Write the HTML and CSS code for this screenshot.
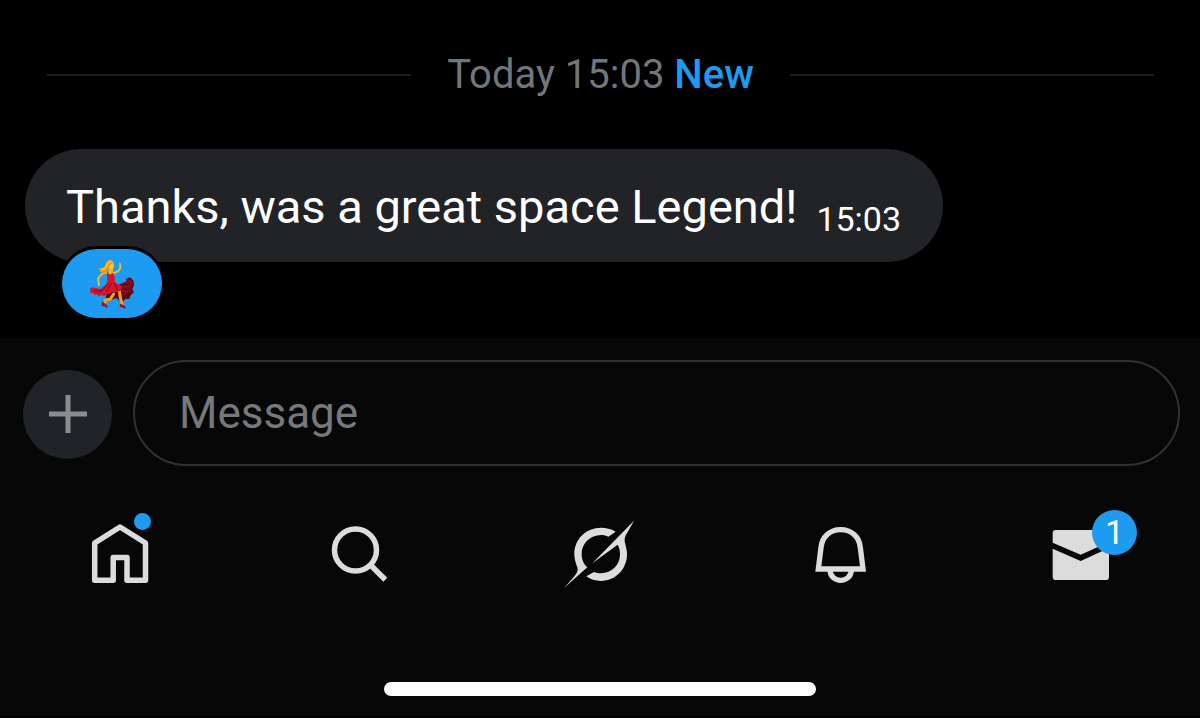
FILE: index.html
```html
<!DOCTYPE html>
<html lang="en">
<head>
<meta charset="utf-8">
<meta name="viewport" content="width=device-width, initial-scale=1">
<title>Messages</title>
<link rel="stylesheet" href="styles.css">
</head>
<body>
<main class="thread">
  <div class="divider"><span class="divider-label">Today 15:03 <strong class="divider-new">New</strong></span></div>
  <div class="message">
    <p class="bubble"><span class="bubble-text">Thanks, was a great space Legend!</span><time class="bubble-time">15:03</time></p>
    <button class="reaction" type="button" aria-label="Dancer reaction">
      <svg class="reaction-icon" viewBox="110 66 150 156" aria-hidden="true">
        <path fill="#5d0712" d="M186 158L211 143L230 136L226 130L238 124L249 133L251 148L246 159L251 169L241 178L237 189L226 188L219 196L205 193L200 187L180 191L166 187L168 175Z"/>
        <path fill="#8d0b1d" d="M211 146L238 128L246 138L238 154L240 166L229 171L222 181L208 169Z"/>
        <path fill="none" stroke="#390611" stroke-width="3" d="M215 148L240 143M214 158L237 161M211 168L227 180"/>
        <path fill="none" stroke="#eca51f" stroke-width="9" stroke-linejoin="round" stroke-linecap="round" d="M207 166L210 185L216 207M190 174L179 190L166 192L162 204"/>
        <path fill="#a30d20" d="M155 196L163 202L173 211L171 215L160 210L154 211ZM209 203L218 206L227 214L224 218L214 214L208 214Z"/>
        <path fill="none" stroke="#f3b72b" stroke-width="6" stroke-linejoin="round" stroke-linecap="round" d="M170 109L153 115L143 128L146 147M190 112L204 105L210 96L209 83"/>
        <path fill="#f6b427" d="M174 98L187 96L190 116L173 119Z"/>
        <path fill="#d31429" d="M170 105L178 116L188 110L193 123L194 139L214 151L212 164L199 169L187 168L177 174L169 172L163 181L154 177L146 181L140 175L132 177L128 171L119 171L121 164L118 158L126 154L151 159L171 141Z"/>
        <path fill="none" stroke="#8c071d" stroke-width="3" d="M175 141L153 166L132 164M184 142L168 165M193 141L201 164M142 172L153 160"/>
        <ellipse cx="182" cy="87" rx="9" ry="13" fill="#ffc43a"/>
        <path fill="#e99814" d="M190 82C187 73 178 70 171 74C165 78 166 87 160 93C154 98 148 94 144 99C149 99 150 102 147 108C154 105 153 113 159 109C158 115 171 108 174 100C179 91 177 81 190 82Z"/>
        <path fill="none" stroke="#ffc73e" stroke-width="4" d="M184 76C170 74 174 90 164 97C159 101 155 99 153 103"/>
      </svg>
    </button>
  </div>
</main>
<footer class="dock">
  <form class="composer">
    <button class="add" type="button" aria-label="Add attachment">
      <svg class="add-icon" viewBox="0 0 38 38" aria-hidden="true"><path fill="none" stroke="#8b8b90" stroke-width="5" d="M19 0V38M0 19H38"/></svg>
    </button>
    <input class="composer-input" type="text" placeholder="Message" aria-label="Message">
  </form>
  <nav class="tabs" aria-label="Primary">
    <a class="tab" href="#home" aria-label="Home">
      <span class="tab-icon">
        <svg class="glyph" viewBox="0 0 90 90" aria-hidden="true"><path class="stroke" stroke-width="5.5" stroke-linejoin="round" d="M45 17L19.7 33V70.2H38.2V47.6H52V70.2H70.5V33Z"/></svg>
        <span class="dot"></span>
      </span>
    </a>
    <a class="tab" href="#search" aria-label="Search">
      <span class="tab-icon">
        <svg class="glyph" viewBox="0 0 90 90" aria-hidden="true"><circle class="stroke" stroke-width="5.5" cx="40.5" cy="40" r="21"/><path class="stroke" stroke-width="5.5" d="M55 54.5L70.3 69.8"/></svg>
      </span>
    </a>
    <a class="tab" href="#grok" aria-label="Grok">
      <span class="tab-icon">
        <svg class="glyph" viewBox="0 0 270 270" aria-hidden="true"><path class="fill" d="M182 65C168 56 153 53 138 53C94 53 58 87 58 131C58 150 64 162 67 172C70 182 66 190 58 199L28 233L97 172C86 163 80 148 80 132C80 100 106 75 138 75C146 75 154 77 160 80ZM237 32L112 160L188 104C193 113 195 122 195 133C195 165 170 190 138 190C130 190 123 188 117 186L94 199C106 208 121 213 138 213C182 213 216 177 216 133C216 118 212 108 210 98C207 84 212 75 218 66Z"/></svg>
      </span>
    </a>
    <a class="tab" href="#notifications" aria-label="Notifications">
      <span class="tab-icon">
        <svg class="glyph" viewBox="-15 -15 270 270" aria-hidden="true"><path class="stroke" stroke-width="16" d="M55 162L63 98C66 65 90 44 122 44C154 44 178 65 181 98L189 162Z"/><path class="stroke" stroke-width="16" d="M90 166C92 206 152 206 154 166"/></svg>
      </span>
    </a>
    <a class="tab" href="#messages" aria-label="Messages, 1 unread">
      <span class="tab-icon">
        <svg class="glyph" viewBox="-15 30 270 270" aria-hidden="true"><path class="fill" d="M48 90H197Q207 90 207 100V126L122 164L38 128V100Q38 90 48 90ZM38 146L122 183L207 144V230Q207 240 197 240H48Q38 240 38 230Z"/></svg>
        <span class="badge">1</span>
      </span>
    </a>
  </nav>
  <div class="home-bar"></div>
</footer>
</body>
</html>
```
FILE: styles.css
```css
* {
  box-sizing: border-box;
}

body {
  margin: 0;
  background: #000;
  color: #fff;
  font-family: Roboto, "Liberation Sans", sans-serif;
}

.thread {
  padding: 50px 24px 20px 25px;
}

.divider {
  display: flex;
  align-items: center;
  gap: 36px;
  padding: 0 22px;
  color: #71767b;
  font-size: 40px;
  line-height: 50px;
}

.divider::before,
.divider::after {
  content: "";
  flex: 1;
  height: 2px;
  background: #1c1e20;
}

.divider-new {
  color: #1d9bf0;
  font-weight: 500;
}

.message {
  display: flex;
  flex-direction: column;
  align-items: flex-start;
  margin-top: 49px;
}

.bubble {
  display: flex;
  align-items: flex-end;
  gap: 19px;
  margin: 0;
  padding: 26px 42px 23px 41px;
  border-radius: 57px;
  background: #212327;
}

.bubble-text {
  font-size: 47px;
  line-height: 64px;
}

.bubble-time {
  font-size: 34px;
  line-height: 40px;
}

.reaction {
  position: relative;
  display: flex;
  align-items: center;
  justify-content: center;
  width: 100px;
  height: 69px;
  margin: -13px 0 0 37px;
  padding: 0;
  border: 0;
  border-radius: 35px;
  background: #1d9bf0;
  box-shadow: 0 0 0 3px #000;
}

.reaction-icon {
  width: 50px;
  height: 52px;
}

.dock {
  padding: 22px 0 20px;
  background: #070707;
}

.composer {
  display: flex;
  align-items: center;
  gap: 21px;
  padding: 0 20px 0 23px;
}

.add {
  display: flex;
  align-items: center;
  justify-content: center;
  width: 89px;
  height: 89px;
  margin-top: 2px;
  padding: 0;
  border: 0;
  border-radius: 50%;
  background: #202327;
}

.add-icon {
  width: 38px;
  height: 38px;
}

.composer-input {
  flex: 1;
  min-width: 0;
  height: 106px;
  padding: 0 44px;
  border: 2px solid #303134;
  border-radius: 53px;
  background: transparent;
  color: #fff;
  font-family: inherit;
  font-size: 44px;
}

.composer-input::placeholder {
  color: #75787c;
  opacity: 1;
}

.tabs {
  display: grid;
  grid-template-columns: repeat(5, 1fr);
  padding-top: 44px;
}

.tab {
  display: flex;
  justify-content: center;
  color: #dcdcdc;
  text-decoration: none;
}

.tab-icon {
  position: relative;
  width: 90px;
  height: 90px;
}

.glyph {
  display: block;
  width: 90px;
  height: 90px;
}

.stroke {
  fill: none;
  stroke: currentColor;
}

.fill {
  fill: currentColor;
}

.dot {
  position: absolute;
  top: 3px;
  right: 14px;
  width: 17px;
  height: 17px;
  border-radius: 50%;
  background: #1d9bf0;
}

.badge {
  position: absolute;
  top: 0;
  left: 57px;
  width: 45px;
  height: 45px;
  border-radius: 50%;
  background: #1d9bf0;
  color: #fff;
  font-size: 34px;
  line-height: 45px;
  text-align: center;
}

.home-bar {
  width: 36%;
  height: 14px;
  margin: 82px auto 0;
  border-radius: 7px;
  background: #fff;
}
```
